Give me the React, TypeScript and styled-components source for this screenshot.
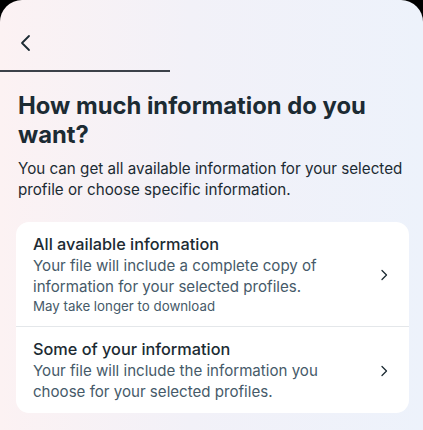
import React from "react";
import styled, { createGlobalStyle } from "styled-components";

const Global = createGlobalStyle`
  html, body { margin: 0; padding: 0; background: #000; }
  body { font-family: Inter, "Noto Sans", sans-serif; -webkit-font-smoothing: antialiased; }
  * { box-sizing: border-box; }
`;

const Screen = styled.div`
  width: 423px;
  height: 430px;
  overflow: hidden;
  border-radius: 22px 22px 0 0;
  background: linear-gradient(90deg, #fcf2f3 0%, #f2f1f8 45%, #edf2fb 100%);
  display: flex;
  flex-direction: column;
`;

const Header = styled.div`
  height: 70px;
  padding: 34px 0 0 19px;
`;

const BackButton = styled.button`
  border: 0;
  background: none;
  padding: 0;
  width: 14px;
  height: 18px;
  display: flex;
  color: #1c2b33;
`;

const Progress = styled.div`
  width: 170px;
  height: 2px;
  background: #3c4149;
`;

const Content = styled.div`
  padding: 19px 8px 0 18px;
`;

const Title = styled.h1`
  margin: 0;
  font-size: 23.8px;
  line-height: 29px;
  font-weight: 700;
  color: #1c2b33;
  letter-spacing: 0;
`;

const Lead = styled.p`
  margin: 9px 0 0;
  font-size: 15.2px;
  line-height: 21px;
  color: #1c2b33;
`;

const Card = styled.div`
  margin: 22px 14px 0 16px;
  background: #fff;
  border-radius: 13px;
  overflow: hidden;
`;

const Option = styled.div`
  display: flex;
  align-items: center;
  padding: 12px 21px 11px 17px;
  & + & { border-top: 1px solid #e4e7ea; }
`;

const OptionText = styled.div`
  flex: 1;
  padding-right: 24px;
`;

const OptionTitle = styled.div`
  font-size: 16.3px;
  line-height: 21px;
  font-weight: 500;
  color: #1c2b33;
`;

const OptionBody = styled.div`
  font-size: 15.1px;
  line-height: 21px;
  color: #465a69;
`;

const OptionNote = styled.div`
  font-size: 13.3px;
  line-height: 18px;
  color: #465a69;
`;

const Chevron = styled.svg`
  width: 8px;
  height: 14px;
  flex: none;
`;

const ChevronRight = () => (
  <Chevron viewBox="0 0 8 14">
    <path d="M2 2.5 L6.5 7 L2 11.5" fill="none" stroke="#1c2b33" strokeWidth="1.3" strokeLinecap="round" strokeLinejoin="round" />
  </Chevron>
);

export default function App() {
  return (
    <>
      <Global />
      <Screen>
        <Header>
          <BackButton aria-label="Back">
            <svg width="14" height="18" viewBox="0 0 14 18">
              <path d="M10 2 L3 9 L10 16" fill="none" stroke="#1c2b33" strokeWidth="1.8" strokeLinecap="round" strokeLinejoin="round" />
            </svg>
          </BackButton>
        </Header>
        <Progress />
        <Content>
          <Title>How much information do you want?</Title>
          <Lead>You can get all available information for your selected profile or choose specific information.</Lead>
        </Content>
        <Card>
          <Option>
            <OptionText>
              <OptionTitle>All available information</OptionTitle>
              <OptionBody>Your file will include a complete copy of information for your selected profiles.</OptionBody>
              <OptionNote>May take longer to download</OptionNote>
            </OptionText>
            <ChevronRight />
          </Option>
          <Option>
            <OptionText>
              <OptionTitle>Some of your information</OptionTitle>
              <OptionBody>Your file will include the information you choose for your selected profiles.</OptionBody>
            </OptionText>
            <ChevronRight />
          </Option>
        </Card>
      </Screen>
    </>
  );
}
